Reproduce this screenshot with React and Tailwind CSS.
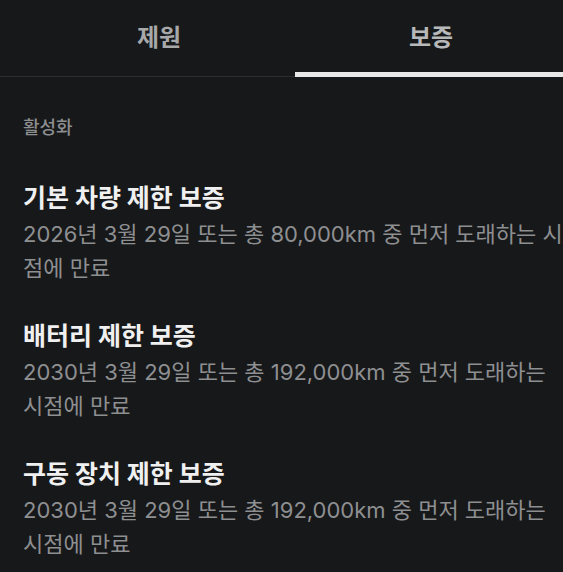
import React, { useState } from "react";

const warranties = [
  {
    title: "기본 차량 제한 보증",
    detail: "2026년 3월 29일 또는 총 80,000km 중 먼저 도래하는 시점에 만료",
  },
  {
    title: "배터리 제한 보증",
    detail: "2030년 3월 29일 또는 총 192,000km 중 먼저 도래하는 시점에 만료",
  },
  {
    title: "구동 장치 제한 보증",
    detail: "2030년 3월 29일 또는 총 192,000km 중 먼저 도래하는 시점에 만료",
  },
];

const App = () => {
  const [tab, setTab] = useState("warranty");

  return (
    <div
      className="min-h-[572px] w-full overflow-hidden bg-[#17181a] text-[#eeeeee]"
      style={{ fontFamily: '"Inter", "Noto Sans CJK KR", sans-serif' }}
    >
      {/* tabs */}
      <div className="h-[77px] border-b border-[#2c2d30]">
        <div className="flex h-full w-[544px] ml-[23px]">
          <button
            onClick={() => setTab("specs")}
            className="relative flex h-full w-[272px] shrink-0 items-center justify-center pb-[1px] text-[24px] font-bold text-[#a7a8a9]"
          >
            제원
            {tab === "specs" && (
              <span className="absolute inset-x-0 bottom-[-1px] h-[5px] bg-[#e8e8e8]" />
            )}
          </button>
          <button
            onClick={() => setTab("warranty")}
            className="relative flex h-full w-[272px] shrink-0 items-center justify-center pb-[1px] text-[24px] font-bold text-[#b7b8b9]"
          >
            보증
            {tab === "warranty" && (
              <span className="absolute inset-x-0 bottom-[-1px] h-[5px] bg-[#e8e8e8]" />
            )}
          </button>
        </div>
      </div>

      {/* content */}
      <div className="pl-[23px] pt-[39px]">
        <div className="text-[18px] leading-[24px] font-medium text-[#8d8e90]">활성화</div>
        <div className="mt-[39px] flex flex-col gap-[32px]">
          {warranties.map((w) => (
            <div key={w.title}>
              <div className="text-[25px] leading-[39px] font-bold text-[#f0f0f0]">
                {w.title}
              </div>
              <div className="text-[22px] leading-[33.5px] text-[#8e8f91]">{w.detail}</div>
            </div>
          ))}
        </div>
      </div>
    </div>
  );
};

export default App;
